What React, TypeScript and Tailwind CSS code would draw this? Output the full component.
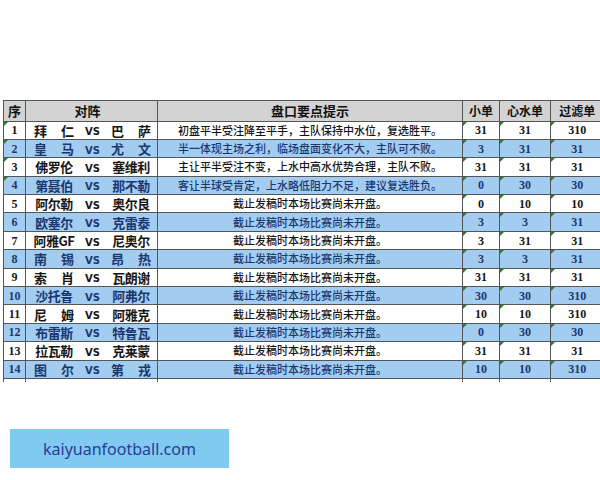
const rows = [
  { no: 1, a: "拜仁", b: "巴萨", tip: "初盘平半受注降至平手，主队保持中水位，复选胜平。", n: ["31", "31", "310"] },
  { no: 2, a: "皇马", b: "尤文", tip: "半一体现主场之利，临场盘面变化不大，主队可不败。", n: ["3", "31", "31"] },
  { no: 3, a: "佛罗伦", b: "塞维利", tip: "主让平半受注不变，上水中高水优势合理，主队不败。", n: ["31", "31", "31"] },
  { no: 4, a: "第聂伯", b: "那不勒", tip: "客让半球受肯定，上水略低阻力不足，建议复选胜负。", n: ["0", "30", "30"] },
  { no: 5, a: "阿尔勒", b: "奥尔良", tip: "截止发稿时本场比赛尚未开盘。", n: ["0", "10", "10"] },
  { no: 6, a: "欧塞尔", b: "克雷泰", tip: "截止发稿时本场比赛尚未开盘。", n: ["3", "3", "31"] },
  { no: 7, a: "阿雅GF", b: "尼奥尔", tip: "截止发稿时本场比赛尚未开盘。", n: ["3", "31", "31"] },
  { no: 8, a: "南锡", b: "昂热", tip: "截止发稿时本场比赛尚未开盘。", n: ["3", "3", "31"] },
  { no: 9, a: "索肖", b: "瓦朗谢", tip: "截止发稿时本场比赛尚未开盘。", n: ["31", "31", "31"] },
  { no: 10, a: "沙托鲁", b: "阿弗尔", tip: "截止发稿时本场比赛尚未开盘。", n: ["30", "30", "310"] },
  { no: 11, a: "尼姆", b: "阿雅克", tip: "截止发稿时本场比赛尚未开盘。", n: ["10", "10", "310"] },
  { no: 12, a: "布雷斯", b: "特鲁瓦", tip: "截止发稿时本场比赛尚未开盘。", n: ["0", "30", "30"] },
  { no: 13, a: "拉瓦勒", b: "克莱蒙", tip: "截止发稿时本场比赛尚未开盘。", n: ["31", "31", "31"] },
  { no: 14, a: "图尔", b: "第戎", tip: "截止发稿时本场比赛尚未开盘。", n: ["10", "10", "310"] },
];

const cjk = { fontFamily: '"Noto Sans CJK SC", "Noto Sans", sans-serif' };
const serif = { fontFamily: '"Liberation Serif", "Noto Sans CJK SC", serif' };

// two-character names are spread across the slot, like the spreadsheet does
const Team = ({ name }: { name: string }) => {
  const spread = name.length === 2;
  return (
    <span className={`flex h-[17px] w-[40px] items-center ${spread ? "justify-between" : "justify-center"}`}>
      {spread ? name.split("").map((c, i) => <span key={i}>{c}</span>) : <span className="whitespace-nowrap tracking-[-0.5px]">{name}</span>}
    </span>
  );
};

const Tick = () => (
  <span className="absolute left-0 top-0 h-0 w-0 border-l-[4px] border-b-[4px] border-l-[#2f7a2f] border-b-transparent" />
);

export default function App() {
  return (
    <div className="h-[480px] w-[600px] overflow-hidden bg-white">
      <div className="pl-[3px] pt-[100px]">
        <table className="w-[600px] table-fixed border-collapse text-[#111]" style={cjk}>
          <colgroup>
            <col className="w-[22px]" />
            <col className="w-[132px]" />
            <col className="w-[305px]" />
            <col className="w-[37px]" />
            <col className="w-[51px]" />
            <col className="w-[53px]" />
          </colgroup>
          <thead>
            <tr className="h-[20px] bg-[#d3d3d3] text-[13px] font-bold">
              <th className="border border-[#555] p-0">序</th>
              <th className="border border-[#555] p-0 pr-[8px]">对阵</th>
              <th className="border border-[#555] p-0">盘口要点提示</th>
              <th className="border border-[#555] p-0 text-[12px]">小单</th>
              <th className="border border-[#555] p-0 text-[12px]">心水单</th>
              <th className="border border-[#555] border-r-0 p-0 text-[12px]">过滤单</th>
            </tr>
          </thead>
          <tbody>
            {rows.map((r) => {
              const blue = r.no % 2 === 0;
              return (
                <tr key={r.no} className={`h-[18.4px] ${blue ? "bg-[#a3cdf0] text-[#1b3770]" : "bg-white text-[#161616]"}`}>
                  <td className="relative border border-[#555] p-0 text-center text-[12px] font-bold leading-none" style={serif}>
                    {r.no}
                    {r.no < 5 && <Tick />}
                  </td>
                  <td className="border border-[#555] p-0">
                    <div className="flex h-[17px] items-center pl-[8px] text-[13px] font-bold leading-none">
                      <Team name={r.a} />
                      <span className="w-[37px] pt-[4px] text-center text-[10px] font-bold leading-none" style={{ fontFamily: '"DejaVu Sans", sans-serif' }}>VS</span>
                      <Team name={r.b} />
                    </div>
                  </td>
                  <td className="border border-[#555] p-0 text-center text-[11px] font-medium leading-none whitespace-nowrap">{r.tip}</td>
                  {r.n.map((v, i) => (
                    <td
                      key={i}
                      className={`relative border border-[#555] p-0 text-center text-[12px] font-bold leading-none ${i === 2 ? "border-r-0" : ""}`}
                      style={serif}
                    >
                      {v}
                      <Tick />
                    </td>
                  ))}
                </tr>
              );
            })}
            <tr className="h-[4px]">
              <td className="border-x border-[#555] p-0" />
              <td className="border-x border-[#555] p-0" />
              <td className="border-x border-[#555] p-0" />
              <td className="border-x border-[#555] p-0" />
              <td className="border-x border-[#555] p-0" />
              <td className="border-l border-[#555] p-0" />
            </tr>
          </tbody>
        </table>
      </div>
      <div className="ml-[10px] mt-[47px] flex h-[39px] w-[219px] items-center justify-center bg-[#80caf0] text-[16px] text-[#2a3a9c]" style={{ fontFamily: '"Noto Sans", sans-serif' }}>
        kaiyuanfootball.com
      </div>
    </div>
  );
}
